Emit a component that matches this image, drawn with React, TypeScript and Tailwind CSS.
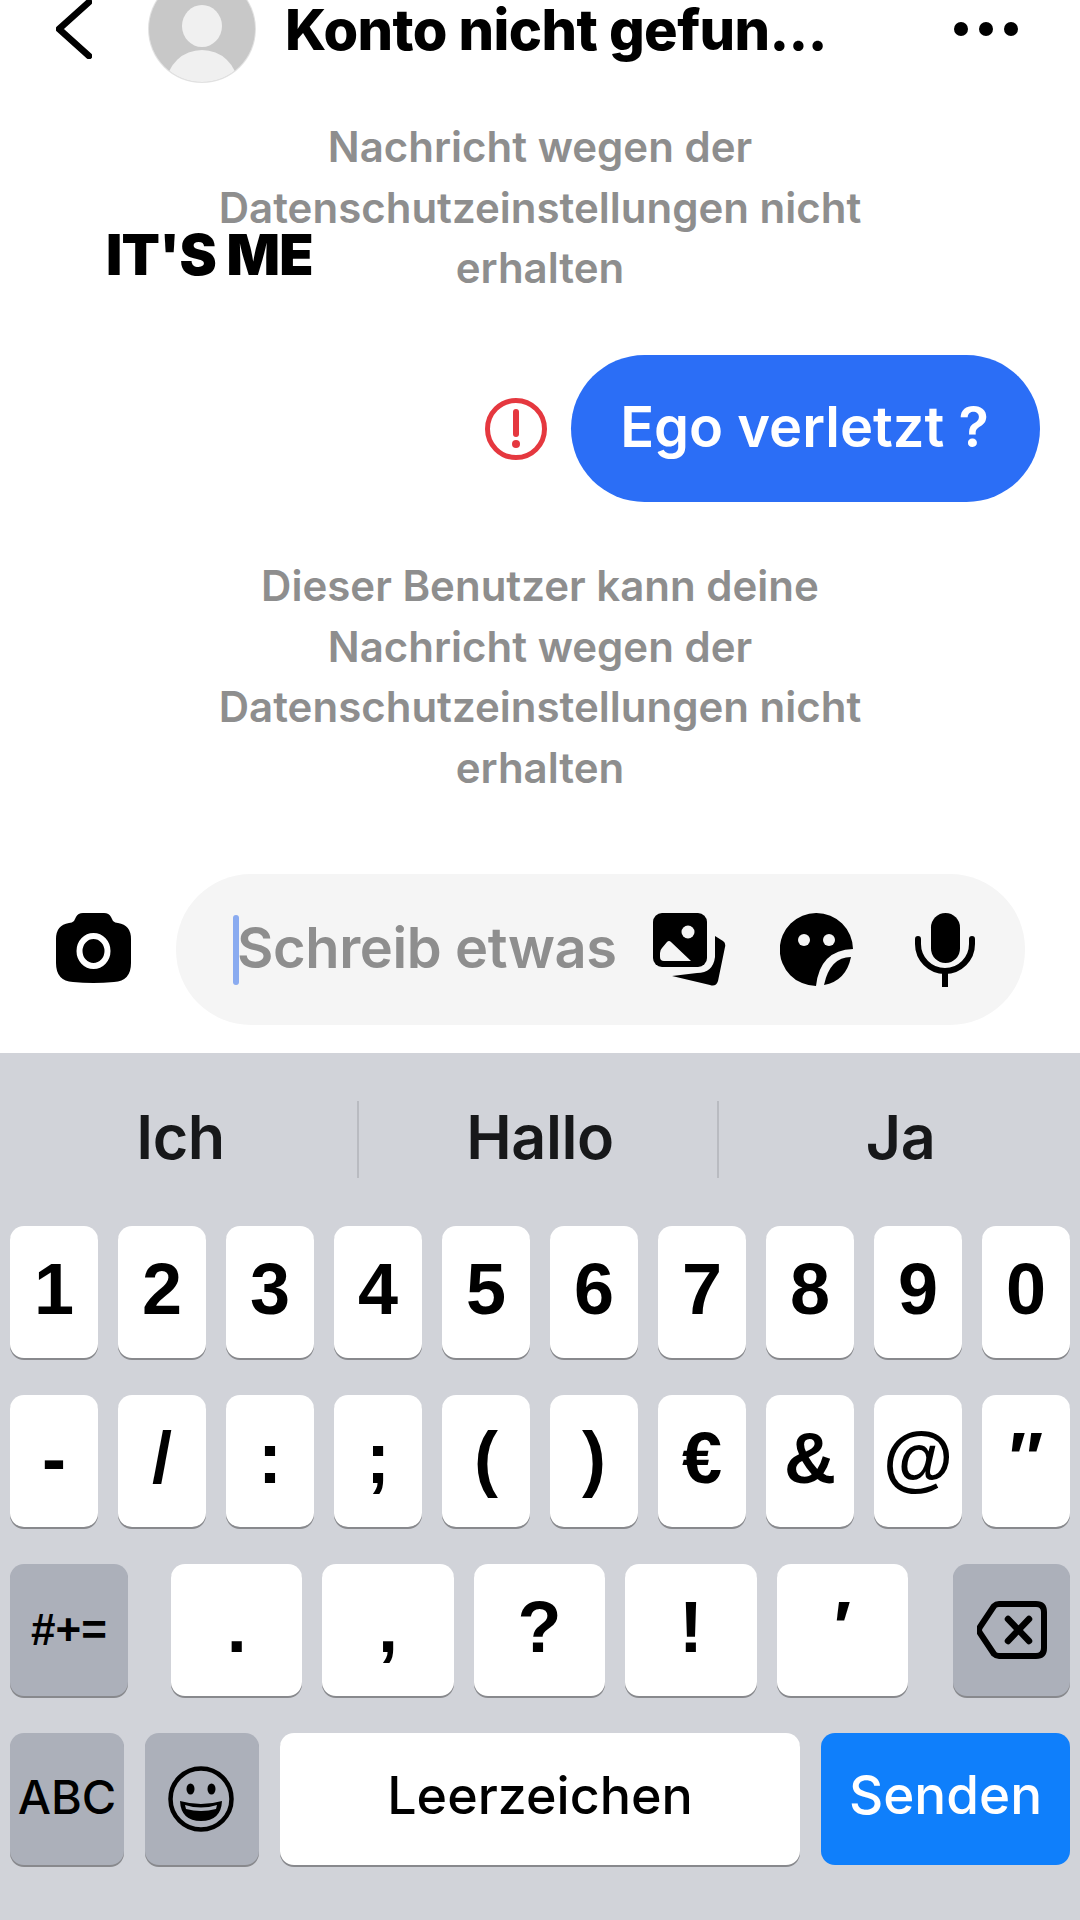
const numberKeys = ["1", "2", "3", "4", "5", "6", "7", "8", "9", "0"];
const symbolKeys = ["-", "/", ":", ";", "(", ")", "€", "&", "@", "″"];
const punctuationKeys = [".", ",", "?", "!", "′"];

function PrivacyNote({ lines }: { lines: string[] }) {
  return (
    <div className="flex flex-col items-center text-[42px] leading-[60.5px] font-semibold text-[#8e8e8e]">
      {lines.map((line) => (
        <p key={line}>{line}</p>
      ))}
    </div>
  );
}

function CharKey({ label }: { label: string }) {
  return (
    <div className="flex-1 rounded-[14px] bg-white shadow-[0_2px_0_#88898d] flex items-center justify-center pb-[6px] text-black text-[72px] font-bold font-['Liberation_Sans',sans-serif]">
      {label}
    </div>
  );
}

function AvatarIcon() {
  return (
    <svg viewBox="0 0 108 108" className="w-[108px] h-[108px] shrink-0">
      <defs>
        <clipPath id="avatar-clip">
          <circle cx="54" cy="54" r="53" />
        </clipPath>
      </defs>
      <circle cx="54" cy="54" r="54" fill="#e2e2e2" />
      <circle cx="54" cy="54" r="53" fill="#c8c8c8" />
      <g clipPath="url(#avatar-clip)" fill="#f0f0f0">
        <ellipse cx="54" cy="51" rx="20" ry="21" />
        <ellipse cx="54" cy="108" rx="35" ry="33" />
      </g>
    </svg>
  );
}

function CameraIcon() {
  return (
    <svg viewBox="0 0 75 70" className="w-[75px] h-[70px] shrink-0">
      <path d="M27 0H48Q53 0 55 4L57 8Q59 10 62 10Q75 12 75 26V50Q75 68 58 69Q37 71 17 69Q0 68 0 50V26Q0 12 13 10Q16 10 18 8L20 4Q22 0 27 0Z" fill="#000" />
      <ellipse cx="37.5" cy="38" rx="14" ry="15" fill="none" stroke="#fff" strokeWidth="6" />
    </svg>
  );
}

function GalleryIcon() {
  return (
    <svg viewBox="0 0 73 73" className="w-[73px] h-[73px]">
      <rect x="0" y="0" width="54" height="54" rx="9" fill="#000" />
      <circle cx="35" cy="19" r="6.5" fill="#f5f5f5" />
      <path d="M7 40Q7 37 9 35L14 29Q16 27 18 29L38 48H11Q7 48 7 44Z" fill="#f5f5f5" />
      <path d="M62 23L70 28Q73 30 72 34L65 68Q63 74 57 72L19 63L44 60Q60 60 62 44Z" fill="#000" />
    </svg>
  );
}

function StickerIcon() {
  return (
    <svg viewBox="0 0 73 74" className="w-[73px] h-[74px]">
      <path d="M36.5 0A36.5 36.5 0 0 1 73 36Q40 37 36 73A36.5 36.5 0 0 1 36.5 0Z" fill="#000" />
      <path d="M71 44Q50 44 44 72Q66 68 71 44Z" fill="#000" />
      <circle cx="24" cy="27" r="6" fill="#f5f5f5" />
      <circle cx="49" cy="27" r="6" fill="#f5f5f5" />
    </svg>
  );
}

function MicIcon() {
  return (
    <svg viewBox="0 0 60 74" className="w-[60px] h-[74px]">
      <rect x="16" y="0" width="29" height="50" rx="14.5" fill="#000" />
      <path d="M3 26V31A27 27 0 0 0 57 31V26" fill="none" stroke="#000" strokeWidth="6" strokeLinecap="round" />
      <path d="M30 57V74" stroke="#000" strokeWidth="6" />
    </svg>
  );
}

function BackspaceIcon() {
  return (
    <svg viewBox="0 0 70 58" className="w-[70px] h-[58px]">
      <path d="M22 3H59Q67 3 67 11V47Q67 55 59 55H22Q19 55 17 53L3 32Q1 29 3 26L17 5Q19 3 22 3Z" fill="none" stroke="#000" strokeWidth="6" strokeLinejoin="round" />
      <path d="M31 18L52 40M52 18L31 40" stroke="#000" strokeWidth="6.5" strokeLinecap="round" />
    </svg>
  );
}

function EmojiIcon() {
  return (
    <svg viewBox="0 0 66 66" className="w-[66px] h-[66px]">
      <circle cx="33" cy="33" r="30.5" fill="none" stroke="#000" strokeWidth="4.5" />
      <ellipse cx="22.5" cy="23" rx="4" ry="5.5" fill="#000" />
      <ellipse cx="43.5" cy="23" rx="4" ry="5.5" fill="#000" />
      <path d="M12 35Q33 41 54 35Q53 55 33 55Q13 55 12 35Z" fill="#000" />
      <path d="M17 39Q33 44 49 39L48 43Q33 47 18 43Z" fill="#acb0ba" />
    </svg>
  );
}

export default function App() {
  return (
    <div className="relative w-[1080px] h-[1920px] overflow-hidden bg-white flex flex-col font-['Inter',sans-serif]">
      {/* header, avatar is cut off by the top edge */}
      <div className="h-[58px] shrink-0 flex items-center">
        <svg viewBox="0 0 36 60" className="ml-[56px] w-[36px] h-[60px] shrink-0">
          <path d="M33 3L3 30L33 57" fill="none" stroke="#000" strokeWidth="6.5" strokeLinecap="round" strokeLinejoin="round" />
        </svg>
        <div className="ml-[56px]">
          <AvatarIcon />
        </div>
        <h1 className="ml-[29px] pt-[2px] text-[56px] leading-[58px] font-extrabold tracking-[-0.6px] text-black whitespace-nowrap">
          Konto nicht gefun...
        </h1>
        <div className="ml-auto mr-[62px] flex gap-[11px]">
          <span className="w-[14px] h-[14px] rounded-full bg-black" />
          <span className="w-[14px] h-[14px] rounded-full bg-black" />
          <span className="w-[14px] h-[14px] rounded-full bg-black" />
        </div>
      </div>

      <div className="mt-[59px]">
        <PrivacyNote lines={["Nachricht wegen der", "Datenschutzeinstellungen nicht", "erhalten"]} />
      </div>

      <div className="mt-[56.5px] flex items-center justify-end gap-[24px] pr-[40px]">
        <svg viewBox="0 0 62 62" className="w-[62px] h-[62px]">
          <circle cx="31" cy="31" r="28.5" fill="none" stroke="#e5383f" strokeWidth="5" />
          <path d="M31 14V36" stroke="#e5383f" strokeWidth="6" strokeLinecap="round" />
          <circle cx="31" cy="46" r="4" fill="#e5383f" />
        </svg>
        <div className="w-[469px] h-[147px] rounded-[74px] bg-[#2b6ef6] flex items-center justify-center pb-[4px] pr-[2px] text-white text-[56px] font-semibold">
          Ego verletzt ?
        </div>
      </div>

      <div className="mt-[54px]">
        <PrivacyNote lines={["Dieser Benutzer kann deine", "Nachricht wegen der", "Datenschutzeinstellungen nicht", "erhalten"]} />
      </div>

      {/* composer */}
      <div className="mt-[76px] flex items-center pl-[56px] pr-[55px]">
        <div className="mb-[4px]">
          <CameraIcon />
        </div>
        <div className="ml-[45px] flex-1 h-[151px] rounded-[75px] bg-[#f5f5f5] flex items-center pl-[57px] pr-[50px]">
          <span className="w-[6px] h-[70px] rounded-full bg-[#8aabf0]" />
          <span className="-ml-[2px] mb-[4px] text-[56px] font-semibold tracking-[-0.4px] text-[#8e8e8e] whitespace-nowrap">Schreib etwas</span>
          <div className="ml-auto flex items-center">
            <GalleryIcon />
            <div className="ml-[54px]">
              <StickerIcon />
            </div>
            <div className="ml-[62px]">
              <MicIcon />
            </div>
          </div>
        </div>
      </div>

      {/* keyboard */}
      <div className="mt-[28px] flex-1 bg-[#d1d3d9] flex flex-col">
        <div className="h-[173px] flex items-center text-[61px] font-semibold tracking-[-0.4px] text-[#17181a]">
          <div className="w-[357px] flex justify-center pb-[4px] pl-[4px]">Ich</div>
          <div className="w-[2px] h-[77px] bg-[#b9bbc1]" />
          <div className="w-[358px] flex justify-center pb-[4px] pl-[4px]">Hallo</div>
          <div className="w-[2px] h-[77px] bg-[#b9bbc1]" />
          <div className="flex-1 flex justify-center pb-[4px] pl-[2px]">Ja</div>
        </div>

        <div className="flex flex-col gap-[37px] px-[10px]">
          <div className="h-[132px] flex gap-[20px]">
            {numberKeys.map((k) => (
              <CharKey key={k} label={k} />
            ))}
          </div>
          <div className="h-[132px] flex gap-[20px]">
            {symbolKeys.map((k) => (
              <CharKey key={k} label={k} />
            ))}
          </div>
          <div className="h-[132px] flex">
            <div className="w-[118px] rounded-[14px] bg-[#acb0ba] shadow-[0_2px_0_#88898d] flex items-center justify-center text-[44px] font-bold text-black font-['Liberation_Sans',sans-serif]">
              #+=
            </div>
            <div className="ml-[43px] w-[737px] flex gap-[20px]">
              {punctuationKeys.map((k) => (
                <CharKey key={k} label={k} />
              ))}
            </div>
            <div className="ml-auto w-[117px] rounded-[14px] bg-[#acb0ba] shadow-[0_2px_0_#88898d] flex items-center justify-center">
              <BackspaceIcon />
            </div>
          </div>
          <div className="h-[132px] flex gap-[21px]">
            <div className="w-[114px] rounded-[14px] bg-[#acb0ba] shadow-[0_2px_0_#88898d] flex items-center justify-center pb-[4px] text-[47px] font-medium text-black">
              ABC
            </div>
            <div className="w-[114px] rounded-[14px] bg-[#acb0ba] shadow-[0_2px_0_#88898d] flex items-center justify-center pr-[2px]">
              <EmojiIcon />
            </div>
            <div className="flex-1 rounded-[14px] bg-white shadow-[0_2px_0_#88898d] flex items-center justify-center pb-[6px] text-[52px] font-medium text-black">
              Leerzeichen
            </div>
            <div className="w-[249px] rounded-[14px] bg-[#0f7ffb] flex items-center justify-center pb-[6px] text-[53px] font-medium text-white">
              Senden
            </div>
          </div>
        </div>
      </div>

      {/* sticker text placed over the chat */}
      <div className="absolute left-[106px] top-[221px] text-[56px] leading-[68px] font-black text-black whitespace-nowrap tracking-[-0.7px]">
        IT'S ME
      </div>
    </div>
  );
}
